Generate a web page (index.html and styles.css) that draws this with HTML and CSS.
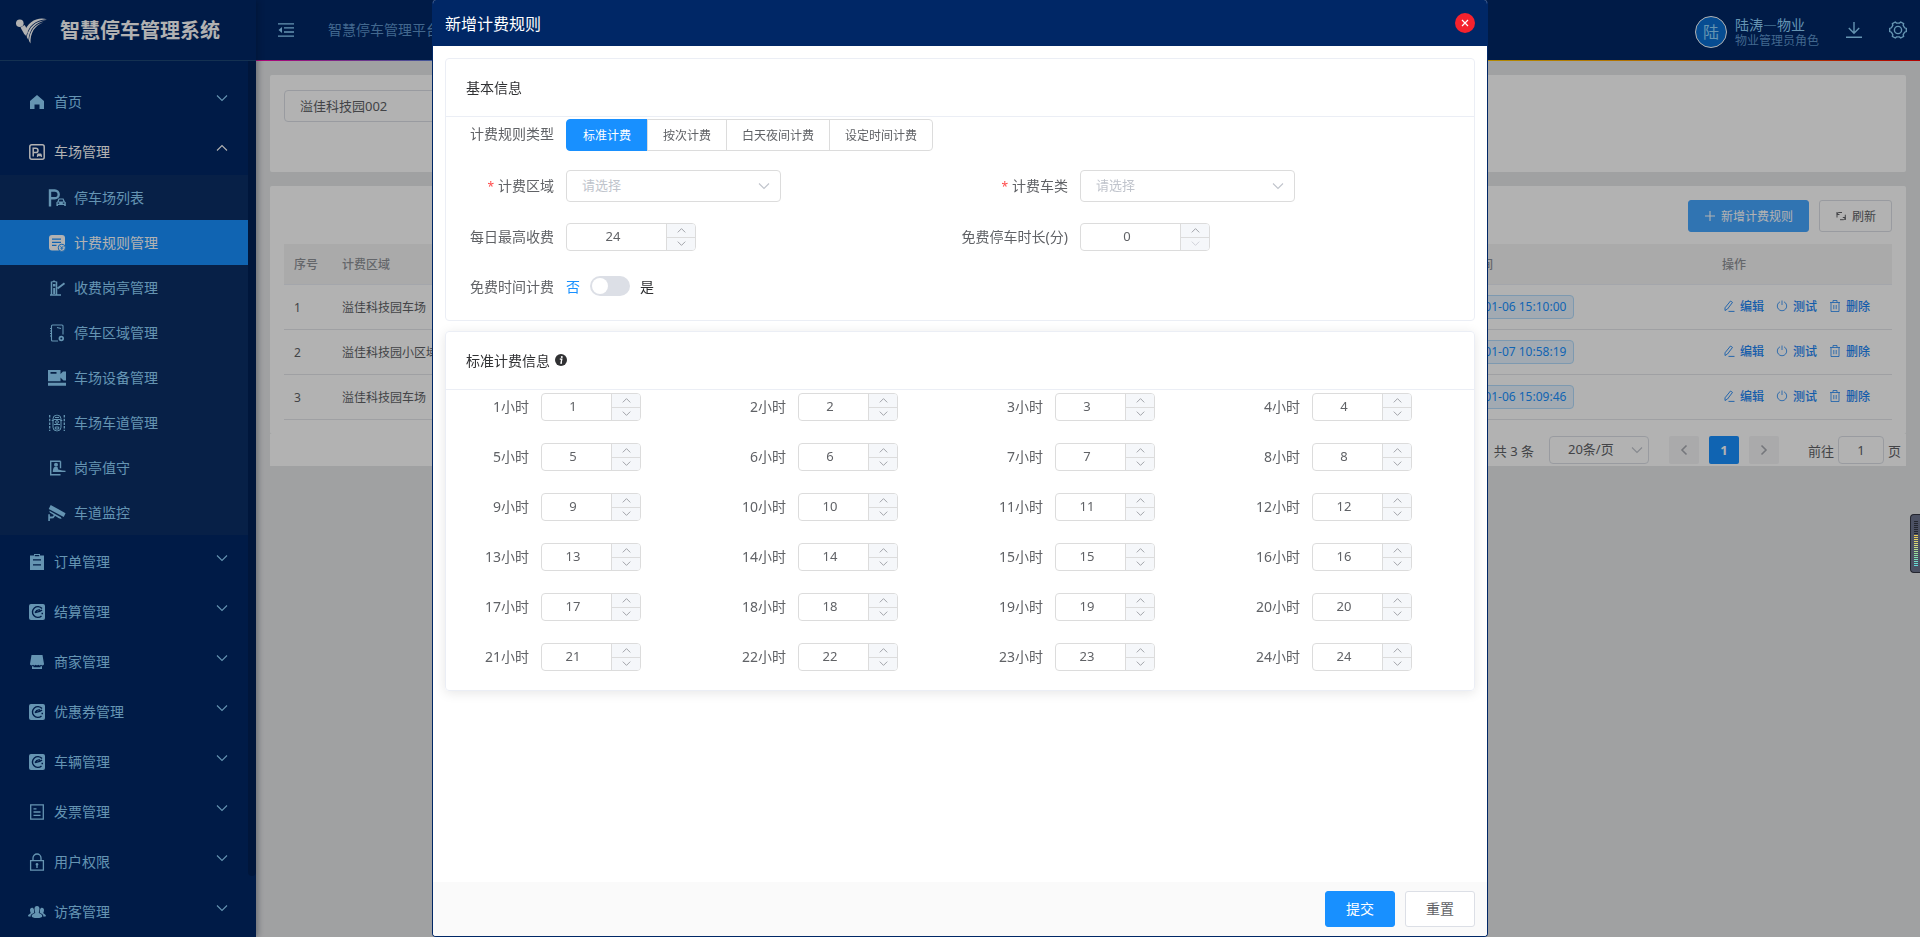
FILE: index.html
```html
<!DOCTYPE html>
<html lang="zh-CN">
<head>
<meta charset="utf-8">
<title>智慧停车管理系统</title>
<link rel="stylesheet" href="styles.css">
</head>
<body>
<svg class="sprite" aria-hidden="true">
  <symbol id="i-down" viewBox="0 0 12 12"><path d="M1 3.5 6 8.5 11 3.5" fill="none" stroke="currentColor" stroke-width="1.1"/></symbol>
  <symbol id="i-up" viewBox="0 0 12 12"><path d="M1 8.5 6 3.5 11 8.5" fill="none" stroke="currentColor" stroke-width="1.1"/></symbol>
  <symbol id="i-left" viewBox="0 0 12 12"><path d="M8.5 1.5 4 6l4.500 4.500" fill="none" stroke="currentColor" stroke-width="1.6"/></symbol>
  <symbol id="i-right" viewBox="0 0 12 12"><path d="M3.500 1.500 8 6l-4.500 4.500" fill="none" stroke="currentColor" stroke-width="1.6"/></symbol>
  <symbol id="i-home" viewBox="0 0 16 16"><path fill="currentColor" d="M8 1 1 7v8h4.500v-4.500h5V15H15V7z"/></symbol>
  <symbol id="i-park" viewBox="0 0 16 16"><rect x=".8" y=".8" width="14.400" height="14.400" rx="2" fill="none" stroke="currentColor" stroke-width="1.500"/><path d="M4.200 12.500V4.200h2.600a2.200 2.200 0 0 1 0 4.400H4.200" fill="none" stroke="currentColor" stroke-width="1.500"/><path fill="currentColor" d="M8.700 9.600h3.400l.8 1.400v2h-1v-.7H8.900v.7h-1v-2z"/></symbol>
  <symbol id="i-lot" viewBox="0 0 18 18"><path d="M2 17.500V1.500h4.800a3.800 3.800 0 0 1 0 7.800H2" fill="none" stroke="currentColor" stroke-width="2.400"/><path fill="currentColor" fill-rule="evenodd" d="M10.500 9.500h5l1.300 3 1 .8V17h-1.600v-1H10v1H8.400v-3.700l1-.8zm.9 1.100-.7 1.900h4.700l-.7-1.900zM9.600 13.600v1.200h1.600v-1.200zm5.200 0v1.200h1.600v-1.200z"/></symbol>
  <symbol id="i-rule" viewBox="0 0 18 18"><rect x="1" y="1" width="16" height="15.500" rx="3" fill="currentColor"/><g class="cut"><path d="M4 5.200h9M4 8.300h9M4 11.400h4.500" stroke-width="1.300"/></g><circle class="ring" cx="13.800" cy="13.800" r="3.600" fill="currentColor"/><path class="cut" d="m12.300 12 1.500 1.800 1.500-1.800M13.800 13.800v2.200M12.300 14.200h3" stroke-width=".8"/></symbol>
  <symbol id="i-booth" viewBox="0 0 18 18"><path d="M3.500 15.500v-13M8.500 15.500v-13M2 16h11" fill="none" stroke="currentColor" stroke-width="1.500"/><path d="M3 3.200 6 1.300l3 1.900zM5 5h2.500v2.500H5zM5.200 9h2v6h-2z" fill="currentColor"/><path d="m9.500 9.500 7-5.200" stroke="currentColor" stroke-width="1.900"/></symbol>
  <symbol id="i-area" viewBox="0 0 18 18"><path d="M15 10.500V2a1 1 0 0 0-1-1H4.500a1 1 0 0 0-1 1v14a1 1 0 0 0 1 1H10M2 4.500h2M2 7h2M2 9.500h2M2 12h2M9 3.500l4 1" fill="none" stroke="currentColor" stroke-width="1.100"/><circle cx="13.300" cy="14.500" r="2.700" fill="currentColor"/><circle class="dot" cx="13.300" cy="14.500" r="1"/></symbol>
  <symbol id="i-device" viewBox="0 0 18 18"><path fill="currentColor" fill-rule="evenodd" d="M0 1h12.500v4L15 2.500h3v9h-2.500L12.500 8.500v3.700H0zm2.500 2v1.800h6V3zM0 13.700h18v3H0z"/></symbol>
  <symbol id="i-lane" viewBox="0 0 18 18"><path d="M1.700 1v16M16.300 1v16" stroke="currentColor" stroke-width="1.300" stroke-dasharray="2.500 1.200"/><g fill="none" stroke="currentColor"><rect x="5" y="1.300" width="8" height="15.500" rx="3.500"/><path d="M5.500 5.500h7M6 10.500h6M3.700 6.500h2M12.300 6.500h2M7 3.500h4M7.300 13h3.400v2H7.300z"/><circle cx="9" cy="8" r="1.400"/></g></symbol>
  <symbol id="i-duty" viewBox="0 0 18 18"><path d="M12.500 2.200H2.700v13.600h9.800M12.500 2.200v7" fill="none" stroke="currentColor" stroke-width="1.400"/><circle cx="8" cy="5.800" r="2" fill="currentColor"/><path fill="currentColor" d="M6.500 8h3l.7 2.400 4 1 3.300.3v1.300H4.800c0-2.500.5-4 1.700-5z"/></symbol>
  <symbol id="i-cctv" viewBox="0 0 20 18"><path fill="currentColor" d="M3 0 19.500 9.200 17.500 13.500.8 4.500zM1.500 6.500l12.800 7.300.8 1.900-3-.8L2 8.500zM.3 10.500h1.800V13l3-.2 1.400-1.700 1.500.9L6 14.800 2.100 15v2.800H.3z"/></symbol>
  <symbol id="i-order" viewBox="0 0 16 16"><path fill="currentColor" fill-rule="evenodd" d="M5 0h6v1.500h4V16H1V1.500h4zm.8 1v1.300h4.400V1zM4 5.300v1.300h8V5.300zM4 10.300v1.300h8v-1.300z"/></symbol>
  <symbol id="i-settle" viewBox="0 0 16 16"><rect width="16" height="16" rx="2" fill="currentColor"/><path class="cut" d="M13 4.500A5.400 5.400 0 1 0 12.500 12M6 8.600c1-.3 5-.7 7-2.600M6 8.600c1.300-2.300 3.400-3 5-2.600M12.500 9.500h1.500" stroke-width="1.400"/></symbol>
  <symbol id="i-shop" viewBox="0 0 16 16"><path fill="currentColor" d="M2.500 1h11l1.500 9a1.700 1.700 0 0 1-3 .8 2 2 0 0 1-2.700 0 2 2 0 0 1-2.600 0 2 2 0 0 1-2.700 0A1.700 1.700 0 0 1 1 10zM3 12.300h1.500v1h7v-1H13V15H3z"/></symbol>
  <symbol id="i-bill" viewBox="0 0 16 16"><path d="M1.700.8h12.600v14.400H1.700zM4.500 4.800h3M4.500 8h7M4.500 11.300h7" fill="none" stroke="currentColor" stroke-width="1.300"/></symbol>
  <symbol id="i-lock" viewBox="0 0 16 18"><path d="M1.600 7.600h12.800v9.600H1.600zM4 7.500V5a4 4 0 0 1 8 0v2.500" fill="none" stroke="currentColor" stroke-width="1.300"/><path d="M8 10a1.400 1.400 0 0 1 .7 2.600V15H7.300v-2.400A1.400 1.400 0 0 1 8 10z" fill="currentColor"/></symbol>
  <symbol id="i-guest" viewBox="0 0 18 14"><path fill="currentColor" d="M9 1c1.700 0 2.500 1.200 2.500 2.800S10.800 7 10.800 7.500c0 1.200 3.500 1.200 3.500 3.500 0 1.500-2 2-5.300 2s-5.300-.5-5.300-2c0-2.300 3.500-2.300 3.500-3.500 0-.5-.7-2.100-.7-3.700S7.300 1 9 1zM4 2.800c1 0 1.700.5 1.900 1.700.2 1.300.4 2.700.3 3.200-1.200.8-3.600 1.200-3.700 4L0 11.300c0-2.500 2.700-2.200 2.700-3.600C2.300 7 2 6 2 5s.7-2.200 2-2.200zM14 2.800c-1 0-1.700.5-1.900 1.700-.2 1.300-.4 2.700-.3 3.200 1.200.8 3.600 1.200 3.700 4l2.500-.4c0-2.500-2.700-2.200-2.700-3.600.4-.7.700-1.700.7-2.700s-.7-2.200-2-2.200z"/></symbol>
</svg>

<div class="app">
  <aside class="sidebar">
    <div class="brand">
      <svg class="brand-logo" viewBox="0 0 32 26"><g fill="#fff"><circle cx="3.800" cy="5.200" r="3.800"/><path d="M4.500 9.500 8.500 7c1.600 2 2.600 4.500 3.300 7.500l-3.300 2z"/><path d="M31 1.200C22-1.500 11.500 3 8 15.200l2.200 3C12.500 8 19 1.800 31 1.200z"/><path d="M30 2.600C20 2.500 12.800 9 10.700 19l1.700 3C13.500 11 19.500 4.200 30 2.600z"/><path d="M27.500 4.200C19 6 13.600 12.500 12.900 22.800l1.600 2.700C14.300 14.500 18.500 7.800 27.500 4.200z"/></g></svg>
      <strong class="brand-name">智慧停车管理系统</strong>
    </div>
    <nav class="menu-wrap">
      <div class="menu">
        <a class="item" href="#"><svg class="icon"><use href="#i-home"/></svg><span>首页</span><svg class="caret"><use href="#i-down"/></svg></a>
        <a class="item open" href="#"><svg class="icon"><use href="#i-park"/></svg><span>车场管理</span><svg class="caret"><use href="#i-up"/></svg></a>
        <div class="submenu">
          <a class="sub" href="#"><svg class="icon"><use href="#i-lot"/></svg><span>停车场列表</span></a>
          <a class="sub active" href="#"><svg class="icon"><use href="#i-rule"/></svg><span>计费规则管理</span></a>
          <a class="sub" href="#"><svg class="icon"><use href="#i-booth"/></svg><span>收费岗亭管理</span></a>
          <a class="sub" href="#"><svg class="icon"><use href="#i-area"/></svg><span>停车区域管理</span></a>
          <a class="sub" href="#"><svg class="icon"><use href="#i-device"/></svg><span>车场设备管理</span></a>
          <a class="sub" href="#"><svg class="icon"><use href="#i-lane"/></svg><span>车场车道管理</span></a>
          <a class="sub" href="#"><svg class="icon"><use href="#i-duty"/></svg><span>岗亭值守</span></a>
          <a class="sub" href="#"><svg class="icon"><use href="#i-cctv"/></svg><span>车道监控</span></a>
        </div>
        <a class="item" href="#"><svg class="icon"><use href="#i-order"/></svg><span>订单管理</span><svg class="caret"><use href="#i-down"/></svg></a>
        <a class="item" href="#"><svg class="icon"><use href="#i-settle"/></svg><span>结算管理</span><svg class="caret"><use href="#i-down"/></svg></a>
        <a class="item" href="#"><svg class="icon"><use href="#i-shop"/></svg><span>商家管理</span><svg class="caret"><use href="#i-down"/></svg></a>
        <a class="item" href="#"><svg class="icon"><use href="#i-settle"/></svg><span>优惠券管理</span><svg class="caret"><use href="#i-down"/></svg></a>
        <a class="item" href="#"><svg class="icon"><use href="#i-settle"/></svg><span>车辆管理</span><svg class="caret"><use href="#i-down"/></svg></a>
        <a class="item" href="#"><svg class="icon"><use href="#i-bill"/></svg><span>发票管理</span><svg class="caret"><use href="#i-down"/></svg></a>
        <a class="item" href="#"><svg class="icon tall"><use href="#i-lock"/></svg><span>用户权限</span><svg class="caret"><use href="#i-down"/></svg></a>
        <a class="item" href="#"><svg class="icon broad"><use href="#i-guest"/></svg><span>访客管理</span><svg class="caret"><use href="#i-down"/></svg></a>
      </div>
      <div class="scroll-track"><div class="scroll-thumb"></div></div>
    </nav>
  </aside>

  <div class="main">
    <header class="topbar">
      <button class="plain" type="button" aria-label="收起菜单"><svg class="fold" viewBox="0 0 16 14"><path d="M0 .8h16M6 4.900h10M6 9h10M0 13.200h16" stroke="currentColor" stroke-width="1.300"/><path d="M4 4v6L.5 7z" fill="currentColor"/></svg></button>
      <span class="platform">智慧停车管理平台</span>
      <div class="user">
        <span class="avatar">陆</span>
        <div class="who"><span class="name">陆涛—物业</span><span class="role">物业管理员角色</span></div>
      </div>
      <button class="plain download" type="button" aria-label="下载"><svg class="tool" viewBox="0 0 18 18"><path d="M9 1v11M3.800 7 9 12.200 14.200 7M1 16.300h16" fill="none" stroke="currentColor" stroke-width="1.400"/></svg></button>
      <button class="plain" type="button" aria-label="设置"><svg class="tool" viewBox="0 0 18 18"><g fill="none" stroke="currentColor" stroke-width="1.400"><path d="M6.300 1 7.500 2.100h3L11.700 1l2.900 1.600-.4 1.700 1.400 2.500 1.700.6v3.200l-1.700.6-1.400 2.500.4 1.700-2.900 1.600-1.200-1.100h-3L6.300 17l-2.900-1.600.4-1.700-1.400-2.500-1.700-.6V7.400l1.700-.6 1.400-2.500-.4-1.700z"/><circle cx="9" cy="9" r="3.600"/></g></svg></button>
    </header>
    <main class="page">
      <section class="filter card">
        <input class="field search" type="text" value="溢佳科技园002" aria-label="停车场">
      </section>
      <section class="card list">
        <div class="toolbar">
          <button class="btn add" type="button"><svg class="bi" viewBox="0 0 12 12"><path d="M6 1v10M1 6h10" stroke="currentColor" stroke-width="1.100"/></svg>新增计费规则</button>
          <button class="btn" type="button"><svg class="bi" viewBox="0 0 12 12"><path d="M2 7.500V4.500a2 2 0 0 1 2-2h3M2 2v2.500h2.500M5 9.700h3.300a2 2 0 0 0 2-2V4.700M7.800 7.500h2.500V10" fill="none" stroke="currentColor"/></svg>刷新</button>
        </div>
        <table class="table">
          <colgroup><col class="c-no"><col><col class="c-time"><col class="c-act"></colgroup>
          <thead><tr><th>序号</th><th>计费区域</th><th>更新时间</th><th>操作</th></tr></thead>
          <tbody id="rows"></tbody>
        </table>
      </section>
      <div class="pager">
        <span class="total">共 3 条</span>
        <div class="select page-size"><select aria-label="每页条数"><option>20条/页</option></select><svg class="arrow"><use href="#i-down"/></svg></div>
        <div class="pages">
          <button class="pg" type="button" disabled aria-label="上一页"><svg><use href="#i-left"/></svg></button>
          <button class="pg current" type="button">1</button>
          <button class="pg" type="button" disabled aria-label="下一页"><svg><use href="#i-right"/></svg></button>
        </div>
        <label class="jump">前往<input type="text" value="1">页</label>
      </div>
    </main>
  </div>
</div>

<div class="overlay">
  <form class="modal" role="dialog" aria-label="新增计费规则">
    <header class="modal-head">
      <span>新增计费规则</span>
      <button class="close" type="button" aria-label="关闭"><svg viewBox="0 0 8 8"><path d="m1 1 6 6M7 1 1 7" stroke="currentColor" stroke-width="1.200"/></svg></button>
    </header>
    <div class="modal-body">
      <section class="panel">
        <h3 class="panel-title">基本信息</h3>
        <div class="basic">
          <div class="row wide type-row">
            <span class="label">计费规则类型</span>
            <div class="segments" role="radiogroup" aria-label="计费规则类型">
              <label><input type="radio" name="type" checked><span>标准计费</span></label>
              <label><input type="radio" name="type"><span>按次计费</span></label>
              <label><input type="radio" name="type"><span>白天夜间计费</span></label>
              <label><input type="radio" name="type"><span>设定时间计费</span></label>
            </div>
          </div>
          <div class="row select-row"><label class="label required" for="area">计费区域</label><div class="select"><select id="area"><option>请选择</option></select><svg class="arrow"><use href="#i-down"/></svg></div></div>
          <div class="row select-row"><label class="label required" for="cartype">计费车类</label><div class="select"><select id="cartype"><option>请选择</option></select><svg class="arrow"><use href="#i-down"/></svg></div></div>
          <div class="row"><label class="label" for="max">每日最高收费</label><div class="number large"><input id="max" type="number" value="24"><span class="steps"><button type="button" aria-label="增加"><svg><use href="#i-up"/></svg></button><button type="button" aria-label="减少"><svg><use href="#i-down"/></svg></button></span></div></div>
          <div class="row"><label class="label" for="free">免费停车时长(分)</label><div class="number large"><input id="free" type="number" value="0"><span class="steps"><button type="button" aria-label="增加"><svg><use href="#i-up"/></svg></button><button type="button" disabled aria-label="减少"><svg><use href="#i-down"/></svg></button></span></div></div>
          <div class="row wide"><label class="label" for="freetime">免费时间计费</label><span class="off">否</span><input class="switch" id="freetime" type="checkbox" role="switch"><span class="on">是</span></div>
        </div>
      </section>
      <section class="panel raised">
        <h3 class="panel-title">标准计费信息<svg class="info" viewBox="0 0 12 12"><circle cx="6" cy="6" r="6" fill="#303133"/><circle cx="6.800" cy="3" r="1" fill="#fff"/><path d="M4.800 5.200h2L6 9h1" fill="none" stroke="#fff" stroke-width="1.300"/></svg></h3>
        <div class="hours" id="hours"></div>
      </section>
    </div>
    <footer class="modal-foot">
      <button class="btn big primary" type="submit">提交</button>
      <button class="btn big" type="reset">重置</button>
    </footer>
  </form>
</div>

<div class="gauge"><div class="gauge-bar"></div></div>
<script src="app.js"></script>
</body>
</html>
```
FILE: styles.css
```css
* { box-sizing: border-box; }
body {
  margin: 0;
  overflow: hidden;
  font-family: "Noto Sans", "Noto Sans CJK SC", sans-serif;
  font-size: 14px;
  color: #303133;
  background: #e6e7e9;
}
button, input, select { font: inherit; color: inherit; margin: 0; }
a { color: inherit; text-decoration: none; }
svg { display: block; flex: none; }
.sprite { position: absolute; width: 0; height: 0; }
.cut { fill: none; stroke: #002766; }
.dot { fill: #002766; }

.app { display: flex; height: 100vh; }

/* sidebar */
.sidebar {
  display: flex;
  flex-direction: column;
  flex: none;
  width: 256px;
  z-index: 1;
  background: #002766;
  color: #91d5ff;
  box-shadow: 2px 0 6px rgba(0, 21, 41, .35);
}
.brand {
  display: flex;
  align-items: center;
  gap: 12px;
  height: 61px;
  padding: 2px 16px 0;
  border-bottom: 1px solid #1d4775;
}
.brand-logo { width: 32px; height: 26px; }
.brand-name { font-size: 20px; line-height: 28px; color: #fff; }
.menu-wrap { display: flex; flex: 1; min-height: 0; }
.menu { flex: 1; padding-top: 14px; overflow: hidden; }
.scroll-track { width: 8px; }
.scroll-thumb { height: 93%; border-radius: 0 0 4px 4px; background: #002055; }
.item {
  display: flex;
  align-items: center;
  gap: 9px;
  height: 50px;
  padding: 4px 20px 0 29px;
}
.item span, .sub span { padding-bottom: 2px; }
.item .icon { width: 16px; height: 16px; }
.item .icon.tall { height: 18px; }
.item .icon.broad { width: 18px; height: 14px; margin: 0 -1px; }
.item.open { color: #fff; }
.caret { width: 12px; height: 12px; margin: 0 0 8px auto; }
.submenu { background: #0b2f66; }
.sub {
  display: flex;
  align-items: center;
  gap: 8px;
  height: 45px;
  padding-left: 48px;
}
.sub .icon { width: 18px; height: 18px; }
.sub.active { background: #1890ff; color: #fff; }
.ring { stroke: #1890ff; }
.sub.active { --cut: #1890ff; }
.cut { stroke: var(--cut, #002766); }

/* top bar */
.main { flex: 1; min-width: 0; }
.topbar {
  display: flex;
  align-items: center;
  height: 61px;
  padding: 0 13px 0 22px;
  background: #002766;
  color: #91d5ff;
  border-bottom: 1px solid;
  border-image: linear-gradient(90deg, #f0a 0, #4a90e2 12%, #0cf 30%, #3d3 50%, #fc0 72%, #f90 85%, #f00 100%) 1;
}
.plain { padding: 0; border: 0; background: none; }
.fold { width: 16px; height: 14px; }
.platform { margin-left: 34px; padding-bottom: 2px; color: #5f95cc; }
.user { display: flex; align-items: center; gap: 8px; margin-left: auto; padding-top: 4px; }
.avatar {
  width: 32px;
  height: 32px;
  border: 1px solid #fff;
  border-radius: 50%;
  background: #0a6ed1;
  font-size: 16px;
  line-height: 30px;
  text-align: center;
}
.who { display: flex; flex-direction: column; font-family: "Noto Sans CJK SC", sans-serif; line-height: 16px; }
.role { font-size: 12px; color: #5f95cc; }
.download { margin: 0 26px; }
.tool { width: 18px; height: 18px; }

/* list page */
.page { padding: 14px; }
.card { padding: 14px; border-radius: 2px; background: #fff; }
.filter { min-height: 97px; margin-bottom: 14px; }
.field {
  height: 32px;
  padding: 0 15px 2px;
  border: 1px solid #dcdfe6;
  border-radius: 4px;
  font-size: 13px;
  color: #606266;
  background: #fff;
}
.search { width: 215px; margin-top: 1px; }
.toolbar { display: flex; justify-content: flex-end; gap: 10px; margin-bottom: 12px; }
.btn {
  display: flex;
  align-items: center;
  justify-content: center;
  gap: 5px;
  height: 32px;
  padding: 0 15px;
  border: 1px solid #dcdfe6;
  border-radius: 3px;
  background: #fff;
  color: #606266;
  font-size: 12px;
}
.bi { width: 12px; height: 12px; }
.btn.add { border-color: #46a6ff; background: #46a6ff; color: #fff; }
.btn.big { width: 70px; height: 36px; padding: 0 0 2px; font-size: 14px; }
.btn.primary { border-color: #1890ff; background: #1890ff; color: #fff; }

.table { width: 100%; table-layout: fixed; border-collapse: separate; border-spacing: 0; font-size: 12px; color: #606266; }
.c-no { width: 48px; }
.c-time { width: 277px; }
.c-act { width: 180px; }
.table th { height: 41px; padding: 0 10px; text-align: left; font-weight: 500; color: #909399; background: #f4f4f4; border-bottom: 1px solid #ebeef5; }
.table td { height: 45px; padding: 0 10px; border-bottom: 1px solid #e4e6ea; white-space: nowrap; }
.tag { display: inline-block; padding: 0 7px; line-height: 22px; border: 1px solid #b4dcfc; border-radius: 4px; background: #e8f4ff; color: #1890ff; }
.ops { display: flex; gap: 12px; padding: 0 1px 2px; }
.ops a { display: flex; align-items: center; gap: 5px; color: #1e86f5; font-weight: 500; }
.ops svg { width: 12px; height: 12px; }

.pager {
  display: flex;
  align-items: center;
  justify-content: flex-end;
  height: 32px;
  padding-right: 5px;
  background: #fff;
  font-size: 13px;
  color: #606266;
}
.pages { display: flex; gap: 10px; margin: 0 29px 0 20px; }
.pg { display: flex; align-items: center; justify-content: center; width: 30px; height: 28px; padding: 0; border: 0; border-radius: 2px; background: #f4f4f5; color: #a8abb2; }
.pg svg { width: 12px; height: 12px; }
.pg.current { background: #1890ff; color: #fff; font-weight: 700; }
.jump { display: flex; align-items: center; gap: 4px; }
.jump input { width: 46px; height: 28px; padding: 0; border: 1px solid #dcdfe6; border-radius: 4px; background: #fff; text-align: center; }
.select { position: relative; width: 215px; }
.select select {
  width: 100%;
  height: 32px;
  padding: 0 15px 2px;
  border: 1px solid #dcdcdc;
  border-radius: 4px;
  background: #fff;
  appearance: none;
  font-size: 13px;
  color: #c0c4cc;
}
.arrow { position: absolute; right: 11px; top: 10px; width: 12px; height: 12px; color: #c0c4cc; pointer-events: none; }
.page-size { width: 100px; margin-left: 15px; }
.page-size select { height: 28px; padding: 0 18px 2px; color: #606266; border-color: #dcdfe6; }
.page-size .arrow { right: 6px; top: 8px; }

/* dialog */
.overlay {
  position: fixed;
  inset: 0;
  z-index: 10;
  display: flex;
  justify-content: center;
  background: rgba(0, 0, 0, .3);
}
.modal {
  display: flex;
  flex-direction: column;
  width: 55%;
  height: 100%;
  overflow: hidden;
  border: 1px solid #002766;
  border-top: 0;
  border-radius: 4px;
  background: #fff;
}
.modal-head {
  display: flex;
  align-items: center;
  justify-content: space-between;
  height: 46px;
  padding: 0 12px;
  background: #002766;
  color: #fff;
  font-size: 16px;
}
.close { display: flex; align-items: center; justify-content: center; width: 20px; height: 20px; padding: 0; border: 0; border-radius: 50%; background: #f5222d; color: #fff; }
.close svg { width: 8px; height: 8px; }
.modal-body { flex: 1; min-height: 0; padding: 12px; }
.modal-foot { display: flex; align-items: center; justify-content: flex-end; gap: 10px; height: 54px; padding: 0 12px; background: #fafafa; }
.panel { margin-bottom: 10px; border: 1px solid #ebeef5; border-radius: 4px; }
.raised { box-shadow: 0 2px 12px rgba(0, 0, 0, .1); }
.panel-title { display: flex; align-items: center; gap: 5px; height: 58px; margin: 0; padding: 0 20px 2px; border-bottom: 1px solid #ebeef5; font-size: 14px; font-weight: 400; }
.info { width: 12px; height: 12px; }
.basic { display: grid; grid-template-columns: 1fr 1fr; }
.row { display: flex; align-items: center; height: 32px; margin-bottom: 18px; }
.wide { grid-column: 1 / -1; }
.type-row { height: 36px; margin-bottom: 16px; }
.type-row .label { padding-bottom: 4px; }
.select-row { height: 34px; margin-bottom: 17px; }
.select-row .label { padding-bottom: 2px; }
.label { flex: none; width: 120px; padding-right: 12px; text-align: right; color: #606266; }
.required::before { content: "*"; margin-right: 4px; font-size: 12px; color: #ff4949; }

.segments { display: flex; font-size: 12px; color: #606266; }
.segments label { position: relative; display: block; }
.segments label + label { margin-left: -1px; }
.segments input { position: absolute; inset: 0; width: 100%; height: 100%; opacity: 0; }
.segments span { display: block; padding: 2px 15px 0; line-height: 28px; border: 1px solid #dcdcdc; }
.segments label:first-child span { padding: 2px 16px 0; border-radius: 4px 0 0 4px; }
.segments label:last-child span { border-radius: 0 4px 4px 0; }
.segments input:checked + span { background: #1890ff; border-color: #1890ff; color: #fff; }

.number { display: flex; width: 100px; height: 28px; margin-top: 2px; overflow: hidden; border: 1px solid #dcdcdc; border-radius: 4px; background: #fff; }
.number.large { width: 130px; }
.number input { flex: 1; min-width: 0; padding: 0 7px 2px 0; border: 0; background: none; text-align: center; font-size: 13px; color: #606266; appearance: textfield; }
.number input::-webkit-inner-spin-button { appearance: none; margin: 0; }
.steps { display: flex; flex-direction: column; width: 29px; border-left: 1px solid #dcdcdc; background: #f5f7fa; }
.steps button { display: flex; flex: 1; align-items: center; justify-content: center; min-height: 0; padding: 0; border: 0; background: none; color: #909399; }
.steps button:first-child { border-bottom: 1px solid #dcdcdc; }
.steps button:disabled { color: #c8cbd2; }
.steps svg { width: 9px; height: 9px; }

.off { color: #1890ff; }
.switch { appearance: none; width: 40px; height: 20px; margin: 0 10px; padding: 2px; border-radius: 10px; background: #dcdfe6; }
.switch::before { content: ""; display: block; width: 16px; height: 16px; border-radius: 50%; background: #fff; }
.hours { display: grid; grid-template-columns: repeat(4, 1fr); }
.hours .label { width: 95px; }

/* edge meter */
.gauge {
  position: fixed;
  right: 0;
  top: 514px;
  z-index: 20;
  width: 10px;
  height: 59px;
  padding: 6px 2px 6px 3px;
  border: 1px solid #24262f;
  border-right: 0;
  border-radius: 4px 0 0 4px;
  background: #4c5163;
}
.gauge-bar {
  height: 100%;
  background:
    repeating-linear-gradient(180deg, transparent 0 1px, #4c5163 1px 2px),
    linear-gradient(180deg, #24262f 0 30%, #f0c94a 30%, #d4dc80 55%, #8fe0a0 75%, #5fdce0 100%);
}
```
FILE: app.js
```js
const rows = [
  ['溢佳科技园车场', '2022-01-06 15:10:00'],
  ['溢佳科技园小区域', '2022-01-07 10:58:19'],
  ['溢佳科技园车场', '2022-01-06 15:09:46'],
];
const edit = '<svg viewBox="0 0 12 12"><path d="M7.500 1 9.500 2.400 4.500 9 2 10.500V7.800zM5.500 11.400H11.500" fill="none" stroke="currentColor" stroke-width=".9"/></svg>';
const test = '<svg viewBox="0 0 12 12"><path d="M4 1.800a4.700 4.700 0 1 0 4 0M6 .5v4.500" fill="none" stroke="currentColor" stroke-width=".8"/></svg>';
const del = '<svg viewBox="0 0 12 12"><path d="M1 2.500h10M4 2.500v-2h4v2M2 2.500v9h8v-9M4.800 5v4.200M7.200 5v4.200" fill="none" stroke="currentColor" stroke-width=".8"/></svg>';

document.getElementById('rows').innerHTML = rows.map(([area, time], i) => `
  <tr>
    <td>${i + 1}</td>
    <td>${area}</td>
    <td><span class="tag">${time}</span></td>
    <td><div class="ops"><a href="#">${edit}编辑</a><a href="#">${test}测试</a><a href="#">${del}删除</a></div></td>
  </tr>`).join('');

document.getElementById('hours').innerHTML = Array.from({ length: 24 }, (_, i) => i + 1).map((h) => `
  <div class="row">
    <label class="label" for="h${h}">${h}小时</label>
    <div class="number">
      <input id="h${h}" type="number" value="${h}">
      <span class="steps">
        <button type="button" aria-label="增加"><svg><use href="#i-up"/></svg></button>
        <button type="button" aria-label="减少"><svg><use href="#i-down"/></svg></button>
      </span>
    </div>
  </div>`).join('');
```
